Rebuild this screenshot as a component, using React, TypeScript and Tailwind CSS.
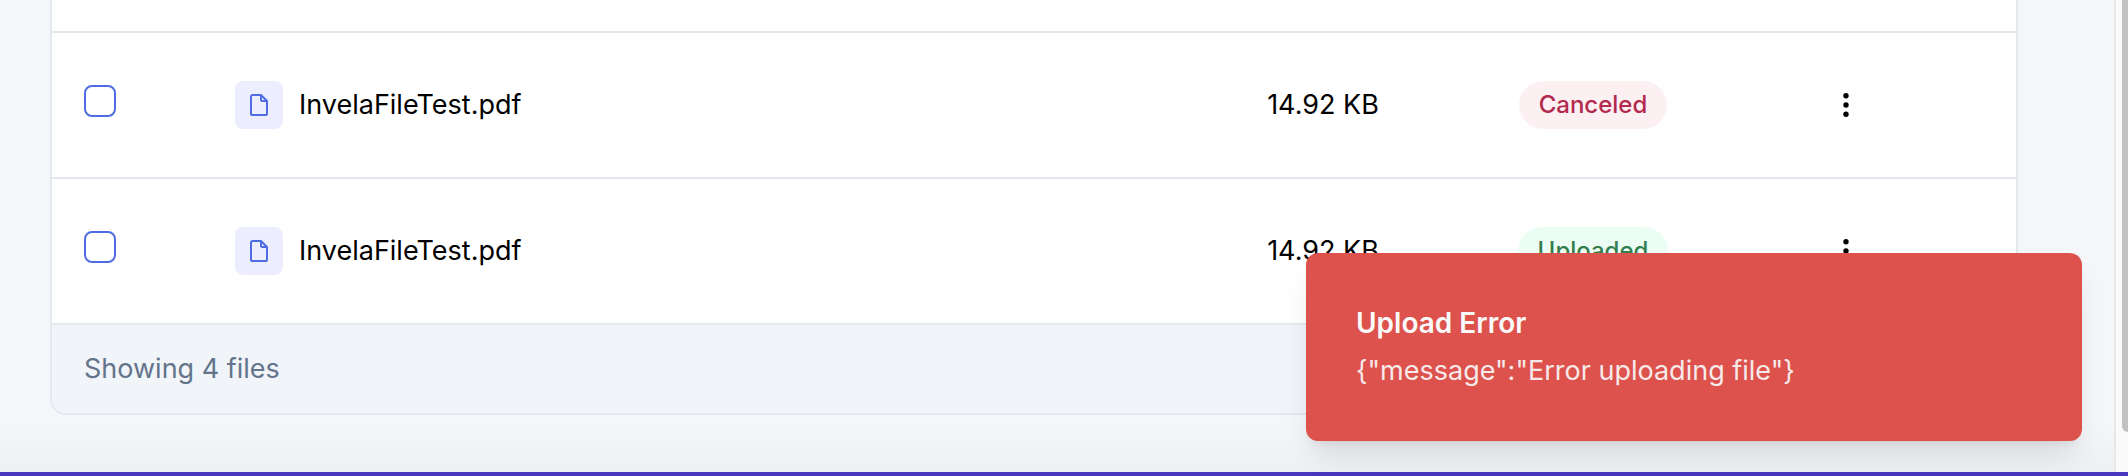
import React from "react";

type Status = "Canceled" | "Uploaded";

interface FileRow {
  id: string;
  name: string;
  size: string;
  status: Status;
}

const files: FileRow[] = [
  { id: "file-3", name: "InvelaFileTest.pdf", size: "14.92 KB", status: "Canceled" },
  { id: "file-4", name: "InvelaFileTest.pdf", size: "14.92 KB", status: "Uploaded" },
];

const badgeStyles: Record<Status, string> = {
  Canceled: "bg-[#fdf0f3] text-[#b4294e]",
  Uploaded: "bg-[#ecfdf3] text-[#347d4f]",
};

function FileIcon() {
  return (
    <svg width="24" height="24" viewBox="0 0 24 24" fill="none" stroke="#4f6ce4" strokeWidth="2" strokeLinejoin="round" aria-hidden="true">
      <path d="M14 2H5.6A1.6 1.6 0 0 0 4 3.6v16.8A1.6 1.6 0 0 0 5.6 22h12.8a1.6 1.6 0 0 0 1.6-1.6V8z" />
      <path d="M14 2v4.5A1.5 1.5 0 0 0 15.500 8H20" />
    </svg>
  );
}

function DotsIcon() {
  return (
    <svg width="32" height="32" viewBox="0 0 32 32" fill="#000" aria-hidden="true">
      <circle cx="16" cy="6.7" r="2.7" />
      <circle cx="16" cy="16" r="2.7" />
      <circle cx="16" cy="25.3" r="2.7" />
    </svg>
  );
}

function Row({ file }: { file: FileRow }) {
  return (
    <tr className="h-[146px] border-b-2 border-[#e2e8ee]">
      <td className="px-8">
        <input
          type="checkbox"
          aria-labelledby={file.id}
          className="mb-2 block size-8 appearance-none rounded-lg border-2 border-[#4f6ce4] bg-white"
        />
      </td>
      <td className="px-8">
        <div className="flex items-center gap-4">
          <span className="flex size-12 items-center justify-center rounded-lg bg-[#ecedfd]">
            <FileIcon />
          </span>
          <span id={file.id}>{file.name}</span>
        </div>
      </td>
      <td className="text-center">{file.size}</td>
      <td>
        <div className="flex justify-center">
          <span className={`rounded-full px-5 py-2 text-2xl leading-8 font-medium ${badgeStyles[file.status]}`}>
            {file.status}
          </span>
        </div>
      </td>
      <td className="pr-[52px]">
        <button type="button" aria-label="Actions" className="mx-auto block">
          <DotsIcon />
        </button>
      </td>
    </tr>
  );
}

export default function App() {
  return (
    <div className="relative flex min-h-screen flex-col bg-[#f4f6fa] font-['Inter',sans-serif] text-[27px] leading-10 text-black">
      <div className="flex flex-1">
        <main className="flex flex-1 flex-col bg-[linear-gradient(to_top,#eff0f4,#f4f6fa_48px)] pr-24 pl-[50px]">
          <section className="overflow-hidden rounded-b-2xl border-2 border-t-0 border-[#e2e8ee] bg-white">
            <table className="w-full table-fixed border-collapse">
              <colgroup>
                <col className="w-[151px]" />
                <col />
                <col className="w-[270px]" />
                <col className="w-[270px]" />
                <col className="w-[288px]" />
              </colgroup>
              <tbody>
                <tr className="h-8 border-b-2 border-[#e2e8ee]">
                  <td colSpan={5} />
                </tr>
                {files.map((file) => (
                  <Row key={file.id} file={file} />
                ))}
              </tbody>
            </table>
            <footer className="bg-[#f1f5fa] px-8 py-6 text-[#64748b]">Showing 4 files</footer>
          </section>
        </main>
        <div className="flex w-3.5 border-l-2 border-[#e8e8e8] bg-[#fafafa] pl-1.5">
          <div className="h-[432px] flex-1 rounded-bl-lg bg-[#c1c1c1]" />
        </div>
      </div>
      <div className="h-1 bg-[#4b36bf]" />

      <div
        role="alert"
        className="absolute right-[46px] bottom-[35px] w-[776px] rounded-xl border-2 border-[#dd524c] bg-[#dd524c] p-12 text-[#fafafa] shadow-[0_20px_30px_-6px_rgba(0,0,0,0.1),0_8px_12px_-8px_rgba(0,0,0,0.1)]"
      >
        <p className="text-[28px] leading-10 font-semibold">Upload Error</p>
        <p className="mt-2 opacity-90">{'{"message":"Error uploading file"}'}</p>
      </div>
    </div>
  );
}
